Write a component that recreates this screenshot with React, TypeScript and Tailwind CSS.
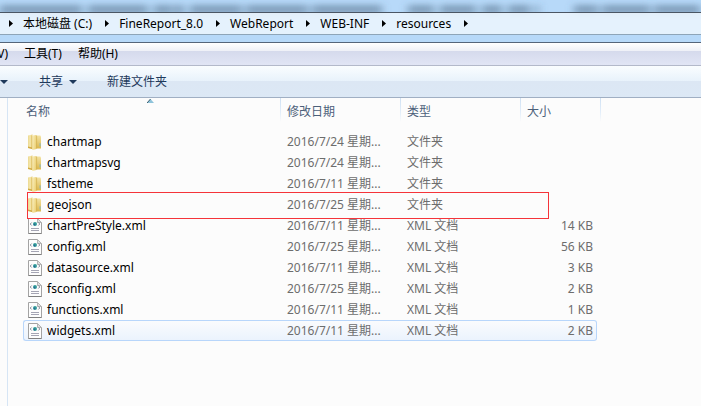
import { useState } from 'react'
import clsx from 'clsx'

type Entry = {
  name: string
  date: string
  kind: 'folder' | 'xml'
  size?: string
}

const entries: Entry[] = [
  { name: 'chartmap', date: '2016/7/24 星期...', kind: 'folder' },
  { name: 'chartmapsvg', date: '2016/7/24 星期...', kind: 'folder' },
  { name: 'fstheme', date: '2016/7/11 星期...', kind: 'folder' },
  { name: 'geojson', date: '2016/7/25 星期...', kind: 'folder' },
  { name: 'chartPreStyle.xml', date: '2016/7/11 星期...', kind: 'xml', size: '14 KB' },
  { name: 'config.xml', date: '2016/7/25 星期...', kind: 'xml', size: '56 KB' },
  { name: 'datasource.xml', date: '2016/7/11 星期...', kind: 'xml', size: '3 KB' },
  { name: 'fsconfig.xml', date: '2016/7/25 星期...', kind: 'xml', size: '2 KB' },
  { name: 'functions.xml', date: '2016/7/11 星期...', kind: 'xml', size: '1 KB' },
  { name: 'widgets.xml', date: '2016/7/11 星期...', kind: 'xml', size: '2 KB' },
]

const crumbs = ['本地磁盘 (C:)', 'FineReport_8.0', 'WebReport', 'WEB-INF', 'resources']

function FolderIcon() {
  return (
    <svg className="shrink-0" width="16" height="16" viewBox="0 0 16 16" aria-hidden="true">
      <defs>
        <linearGradient id="folderLeft" x1="0" y1="0" x2="1" y2="0">
          <stop offset="0" stopColor="#ecd990" />
          <stop offset="0.5" stopColor="#f6e8ae" />
          <stop offset="1" stopColor="#dfc060" />
        </linearGradient>
        <linearGradient id="folderMid" x1="0" y1="0" x2="1" y2="0.3">
          <stop offset="0" stopColor="#fbf2c4" />
          <stop offset="1" stopColor="#ecd27a" />
        </linearGradient>
        <linearGradient id="folderRight" x1="0" y1="0" x2="0" y2="1">
          <stop offset="0" stopColor="#f3e3a4" />
          <stop offset="1" stopColor="#dcb84e" />
        </linearGradient>
      </defs>
      <path d="M8 1.5h5.3l.7 1v12H8z" fill="url(#folderRight)" />
      <path d="M1 1.5 5.5.5v14.6L1 14z" fill="url(#folderLeft)" />
      <path d="M5 1.6 9.4 1v14L5.6 16l-.6-.8z" fill="url(#folderMid)" />
      <path d="M5 2v13" stroke="#d3b04c" strokeOpacity="0.7" strokeWidth="0.6" />
      <path d="M9.6 1.6v13" stroke="#cda843" strokeWidth="0.6" />
      <path d="M1 12.5 5 13.6v1.5L1 14z" fill="#d1aa42" />
      <path d="M12.6 9.2h.9v3.4h-.9z" fill="#7db7cb" />
    </svg>
  )
}

function XmlIcon() {
  return (
    <svg className="shrink-0" width="16" height="16" viewBox="0 0 16 16" aria-hidden="true">
      <path d="M1.5.5h9l4 4v11h-13z" fill="#fdfdfd" stroke="#a3a3a3" />
      <path d="M1.5 15.5h13" stroke="#808080" />
      <path d="M10.5.5v4h4z" fill="#dedede" stroke="#b4b4b4" />
      <path d="M4.7 4.5 3.2 6l1.5 1.5M11.3 4.5 12.8 6l-1.5 1.5" fill="none" stroke="#777f8c" strokeWidth="0.9" />
      <circle cx="8" cy="6" r="2" fill="#35a09a" />
      <circle cx="7.5" cy="6.5" r="0.9" fill="#2a6796" />
      <path d="M4 10.5h8M4 12.5h8" stroke="#a5a5b4" />
    </svg>
  )
}

function Crumb() {
  return (
    <svg className="shrink-0" width="4" height="7" viewBox="0 0 4 7" aria-hidden="true">
      <path d="M0 0v7l4-3.5z" fill="#000" />
    </svg>
  )
}

function Caret() {
  return (
    <svg className="shrink-0" width="8" height="4" viewBox="0 0 8 4" aria-hidden="true">
      <path d="M0 0h8L4 4z" fill="#1e395b" />
    </svg>
  )
}

// Aero glass: text of the window behind shows through, out of focus
function GlassHaze() {
  const smudges = [
    [0, 82], [88, 60], [154, 18], [174, 10], [190, 52], [246, 62], [312, 70],
    [408, 26], [440, 36], [482, 20], [508, 22], [535, 4], [574, 24], [602, 48], [654, 46],
  ]
  return (
    <svg className="absolute inset-x-0 top-0 h-5 w-full" viewBox="0 0 701 20" preserveAspectRatio="none" aria-hidden="true">
      <defs>
        <filter id="haze" x="-5%" y="-100%" width="110%" height="300%">
          <feGaussianBlur stdDeviation="4 3" />
        </filter>
      </defs>
      <g filter="url(#haze)" fill="#47617e" fillOpacity="0.5">
        {smudges.map(([x, w]) => (
          <rect key={x} x={x} y="5" width={w} height="9" />
        ))}
      </g>
    </svg>
  )
}

const divider = 'bg-[linear-gradient(#cfe1f3,#e3eefa_60%,transparent)] bg-[length:1px_24px] bg-no-repeat bg-left-top'

export default function App() {
  const [selected, setSelected] = useState('widgets.xml')

  return (
    <div className="flex min-h-screen flex-col bg-[#fcfcfc] font-['Noto_Sans','Noto_Sans_CJK_SC',sans-serif] text-xs whitespace-nowrap text-black">
      {/* Address bar */}
      <header className="relative overflow-hidden border-b border-[#55657a] bg-[#b7d9f9]">
        <GlassHaze />
        <nav aria-label="路径" className="relative mt-3 mb-[7px] flex h-[23px] items-center border-t border-b border-t-[#4b5664] border-b-[#8ea5b8] bg-[#eaf4fd]/90 pl-[9px]">
          <Crumb />
          {crumbs.map((c) => (
            <div key={c} className="flex items-center">
              <a href="#" className="mr-[13px] ml-[10px]">{c}</a>
              <Crumb />
            </div>
          ))}
        </nav>
      </header>

      {/* Menu bar */}
      <div className="flex h-[23px] items-center border-b border-[#b3b9ca] bg-[linear-gradient(#ffffff,#eef0f7_8px,#d5daec_8px,#e1e5f5)]">
        <button type="button" className="flex w-2 justify-end">V)</button>
        <button type="button" className="ml-4">工具(T)</button>
        <button type="button" className="ml-4">帮助(H)</button>
      </div>

      {/* Toolbar */}
      <div className="flex h-8 items-center border-b border-[#a0afc3] bg-[linear-gradient(#fafdff,#e8f2fb_15px,#dce7f4_15px,#dce8f5)] text-[#1e395b]">
        <button type="button" aria-label="更多"><Caret /></button>
        <button type="button" className="ml-[31px] flex items-center gap-[6px]">
          共享
          <Caret />
        </button>
        <button type="button" className="ml-[30px]">新建文件夹</button>
      </div>

      {/* File list */}
      <main className="relative ml-[7px] flex-1 border-l border-[#d6e5f5] pl-[15px]">
        <table className="w-[578px] table-fixed border-separate border-spacing-0">
          <colgroup>
            <col className="w-[257px]" />
            <col className="w-[120px]" />
            <col className="w-[120px]" />
            <col className="w-[77px]" />
            <col className="w-1" />
          </colgroup>
          <thead className="text-left text-[#4c607a]">
            <tr className="h-[33px] align-top">
              <th className="relative p-0 pt-[6px] pl-[3px] font-normal">
                名称
                <svg className="absolute top-px left-[124px]" width="7" height="4" viewBox="0 0 7 4" aria-hidden="true">
                  <path d="M3.5 0 7 4H0z" fill="#8ec3da" />
                  <path d="M3.5 0 0 4" stroke="#3c5e6f" />
                </svg>
              </th>
              <th className={clsx(divider, 'p-0 pt-[6px] pl-[7px] font-normal')}>修改日期</th>
              <th className={clsx(divider, 'p-0 pt-[6px] pl-[7px] font-normal')}>类型</th>
              <th className={clsx(divider, 'p-0 pt-[6px] pl-[7px] font-normal')}>大小</th>
              <td className="bg-[linear-gradient(#cfe1f3,#e3eefa_60%,transparent)] bg-[length:1px_24px] bg-right-top bg-no-repeat p-0"></td>
            </tr>
          </thead>
          <tbody className="text-[#6d6d6d]">
            {entries.map((e) => {
              const on = e.name === selected
              const cell = clsx(
                'h-[21px] border-y p-0',
                on ? 'border-[#b8d6fb] bg-linear-to-b from-[#fafbfd] to-[#ebf3fd]' : 'border-transparent',
              )
              return (
                <tr key={e.name} onClick={() => setSelected(e.name)}>
                  <td className={clsx(cell, 'rounded-l-[3px] border-l pl-[3px] text-black')}>
                    <div className="flex items-center gap-1">
                      {e.kind === 'folder' ? <FolderIcon /> : <XmlIcon />}
                      {e.name}
                    </div>
                  </td>
                  <td className={clsx(cell, 'pl-[7px]')}>{e.date}</td>
                  <td className={clsx(cell, 'pl-[7px]')}>{e.kind === 'folder' ? '文件夹' : 'XML 文档'}</td>
                  <td className={clsx(cell, 'rounded-r-[3px] border-r pr-[3px] text-right')}>{e.size}</td>
                </tr>
              )
            })}
          </tbody>
        </table>

        {/* Highlight around geojson */}
        <div className="pointer-events-none absolute top-[94px] left-[19px] h-[27px] w-[522px] border border-[#f5343a]"></div>
      </main>
    </div>
  )
}
